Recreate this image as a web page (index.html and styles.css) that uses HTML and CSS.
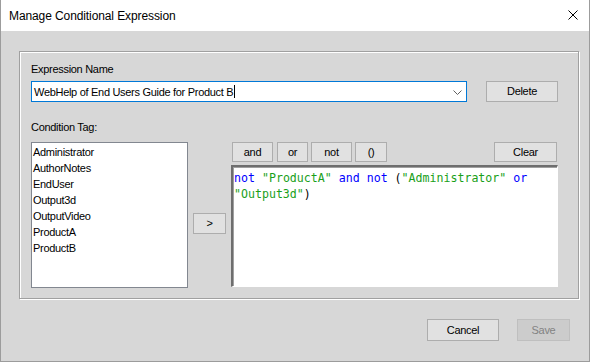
FILE: index.html
```html
<!DOCTYPE html>
<html>
<head>
<meta charset="utf-8">
<link rel="stylesheet" href="styles.css">
</head>
<body>
<div class="window">
  <div class="titlebar">
    <span class="title">Manage Conditional Expression</span>
    <svg class="close" width="10" height="10" viewBox="0 0 10 10"><path d="M0.5 0.5L9.5 9.5M9.5 0.5L0.5 9.5" stroke="#000" stroke-width="1" fill="none"/></svg>
  </div>
  <div class="body">
    <div class="group">
      <div class="label label-name">Expression Name</div>
      <div class="row-name">
        <div class="combo">
          <span class="combo-text">WebHelp of End Users Guide for Product B</span><span class="caret"></span>
          <svg class="chev" width="9" height="5" viewBox="0 0 9 5"><path d="M0.5 0.5L4.5 4.5L8.5 0.5" stroke="#606060" stroke-width="1" fill="none"/></svg>
        </div>
        <button class="btn btn-delete">Delete</button>
      </div>
      <div class="label label-tag">Condition Tag:</div>
      <div class="row-tags">
        <div class="listbox">
          <div class="item">Administrator</div>
          <div class="item">AuthorNotes</div>
          <div class="item">EndUser</div>
          <div class="item">Output3d</div>
          <div class="item">OutputVideo</div>
          <div class="item">ProductA</div>
          <div class="item">ProductB</div>
        </div>
        <div class="mid">
          <button class="btn btn-add">&gt;</button>
        </div>
        <div class="editor">
          <div class="ops">
            <button class="btn op op-and">and</button>
            <button class="btn op op-or">or</button>
            <button class="btn op op-not">not</button>
            <button class="btn op op-par">()</button>
            <button class="btn op op-clear">Clear</button>
          </div>
          <div class="code"><span class="kw">not</span> <span class="str">"ProductA"</span> <span class="kw">and</span> <span class="kw">not</span> (<span class="str">"Administrator"</span> <span class="kw">or</span><br><span class="str">"Output3d"</span>)</div>
        </div>
      </div>
    </div>
    <div class="footer">
      <button class="btn btn-cancel">Cancel</button>
      <button class="btn btn-save" disabled>Save</button>
    </div>
  </div>
</div>
</body>
</html>
```
FILE: styles.css
```css
html, body {
  margin: 0;
  padding: 0;
}
body {
  width: 590px;
  height: 362px;
  overflow: hidden;
  font-family: "Liberation Sans", Arial, sans-serif;
  font-size: 11px;
  letter-spacing: -0.3px;
  color: #000;
}
.window {
  width: 590px;
  height: 362px;
  box-sizing: border-box;
  border: 1px solid #9c9c9c;
  border-top: none;
  display: flex;
  flex-direction: column;
  background: #d7d7d7;
}
.titlebar {
  height: 31px;
  background: #fff;
  display: flex;
  align-items: center;
  justify-content: space-between;
  padding: 0 11px 0 8px;
  flex: none;
}
.title {
  font-family: "Liberation Sans", Arial, sans-serif;
  font-size: 12px;
  letter-spacing: -0.1px;
  color: #000;
}
.close {
  display: block;
  margin-top: -2px;
}
.body {
  flex: 1;
  padding: 20px 0 0 18px;
  display: flex;
  flex-direction: column;
}
.group {
  width: 547px;
  height: 246px;
  border: 1px solid #a0a0a0;
  box-shadow: inset 1px 1px 0 #fff, 1px 1px 0 #fff;
  box-sizing: content-box;
  padding: 0 0 0 11px;
  display: flex;
  flex-direction: column;
}
.label {
  height: 13px;
  line-height: 13px;
}
.label-name {
  margin-top: 11px;
}
.row-name {
  margin-top: 5px;
  display: flex;
  align-items: flex-start;
}
.combo {
  width: 432px;
  height: 19px;
  border: 1px solid #0078d7;
  background: #fff;
  display: flex;
  align-items: center;
  padding-left: 2px;
  box-sizing: content-box;
  position: relative;
}
.combo-text {
  white-space: nowrap;
}
.caret {
  display: inline-block;
  width: 1px;
  height: 13px;
  background: #000;
  margin-left: 1px;
}
.chev {
  position: absolute;
  right: 4px;
  top: 8px;
}
.btn {
  font-family: "Liberation Sans", Arial, sans-serif;
  font-size: 11px;
  letter-spacing: -0.3px;
  color: #000;
  background: #e1e1e1;
  border: 1px solid #adadad;
  box-sizing: border-box;
  padding: 0;
  margin: 0;
  line-height: 1;
}
.btn-delete {
  width: 72px;
  height: 21px;
  margin-left: 19px;
}
.label-tag {
  margin-top: 19px;
}
.row-tags {
  margin-top: 8px;
  display: flex;
  align-items: flex-start;
}
.listbox {
  width: 157px;
  height: 146px;
  box-sizing: border-box;
  border: 1px solid #828790;
  background: #fff;
  padding: 1px 0 0 1px;
}
.item {
  height: 16px;
  line-height: 16px;
  white-space: nowrap;
}
.mid {
  width: 43px;
  display: flex;
  justify-content: center;
  padding-top: 71px;
}
.btn-add {
  width: 33px;
  height: 21px;
}
.editor {
  width: 327px;
  display: flex;
  flex-direction: column;
}
.ops {
  display: flex;
  height: 21px;
  padding-left: 1px;
}
.op {
  height: 20px;
}
.op-and { width: 41px; }
.op-or { width: 31px; margin-left: 4px; }
.op-not { width: 41px; margin-left: 3px; }
.op-par { width: 32px; margin-left: 3px; }
.op-clear { width: 63px; margin-left: auto; margin-right: 1px; }
.code {
  margin-top: 2px;
  height: 122px;
  box-sizing: border-box;
  background: #fff;
  border-top: 2px solid #6e6e6e;
  border-left: 2px solid #6e6e6e;
  border-right: 1px solid #fff;
  border-bottom: 1px solid #fff;
  box-shadow: inset 1px 1px 0 #a0a0a0;
  padding: 3px 0 0 1px;
  font-family: "DejaVu Sans Mono", "Liberation Mono", monospace;
  font-size: 11.6px;
  letter-spacing: 0;
  line-height: 16px;
  color: #000;
  white-space: nowrap;
}
.kw { color: #0000ff; }
.str { color: #19a019; }
.footer {
  display: flex;
  justify-content: flex-end;
  padding: 20px 19px 0 0;
  gap: 18px;
}
.btn-cancel {
  width: 72px;
  height: 22px;
}
.btn-save {
  width: 53px;
  height: 22px;
  background: #cccccc;
  border-color: #bfbfbf;
  color: #838383;
}
```
